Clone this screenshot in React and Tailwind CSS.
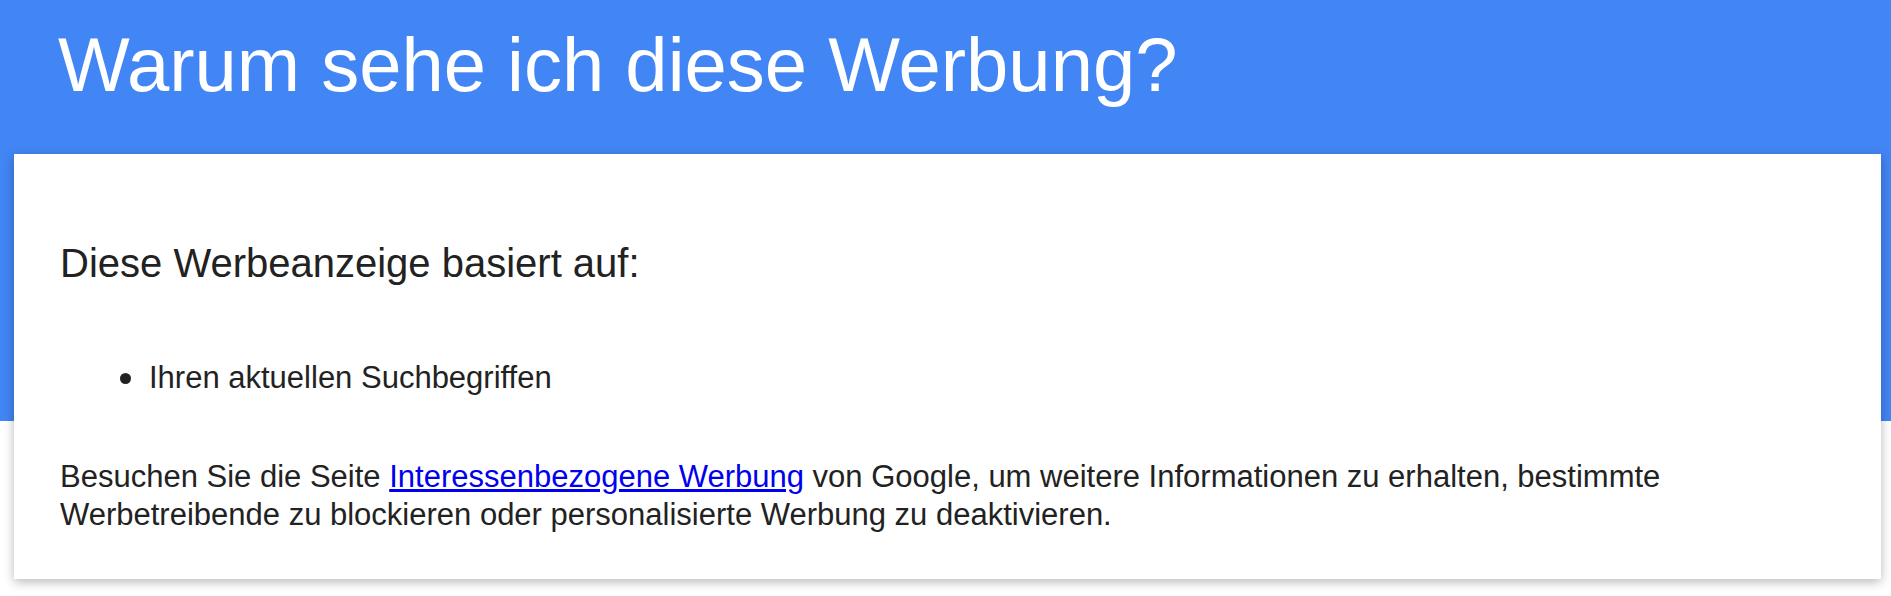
// App.jsx
import React from "react";

/* -----------------------------------------------------------------
   "Warum sehe ich diese Werbung?" – ad info page
   ----------------------------------------------------------------- */
export default function App() {
  return (
    <div
      className="min-h-screen bg-[linear-gradient(to_bottom,#4285f4_421px,#ffffff_421px)] text-[#222222]"
      style={{ fontFamily: '"Liberation Sans", Arial, sans-serif' }}
    >
      {/* ---------- Header ---------- */}
      <header className="pt-[27px] pb-[51px] pl-[58px]">
        <h1 className="text-[76px] leading-none text-white font-normal">
          Warum sehe ich diese Werbung?
        </h1>
      </header>

      {/* ---------- Card ---------- */}
      <main className="ml-[14px] mr-[10px] bg-white shadow-[0_3px_10px_rgba(0,0,0,0.28)] pl-[46px] pr-[46px] pt-[86px] pb-[45px]">
        <h2 className="text-[40px] leading-[46px] font-normal">
          Diese Werbeanzeige basiert auf:
        </h2>

        <ul className="mt-[73px] pl-[60px]">
          <li className="flex items-center gap-[18px] text-[31px] leading-[38px]">
            <span className="w-[11px] h-[11px] rounded-full bg-[#222222] shrink-0" />
            Ihren aktuellen Suchbegriffen
          </li>
        </ul>

        <p className="mt-[61px] text-[31px] leading-[38px] max-w-[1660px]">
          Besuchen Sie die Seite{" "}
          <a href="#" className="text-[#0000ee] underline">
            Interessenbezogene Werbung
          </a>{" "}
          von Google, um weitere Informationen zu erhalten, bestimmte
          Werbetreibende zu blockieren oder personalisierte Werbung zu
          deaktivieren.
        </p>
      </main>
    </div>
  );
}
